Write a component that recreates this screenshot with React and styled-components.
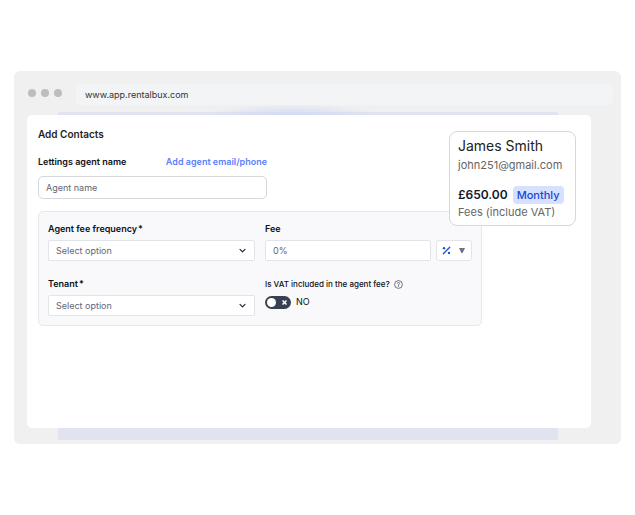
import React, { useState } from 'react';
import styled, { createGlobalStyle } from 'styled-components';

const GlobalStyle = createGlobalStyle`
  *,
  *::before,
  *::after {
    box-sizing: border-box;
  }

  body {
    margin: 0;
    background: #fff;
    color: #0f172a;
    font-family: Inter, 'Liberation Sans', sans-serif;
    font-size: 9px;
    line-height: 14px;
  }

  button,
  input,
  select {
    font: inherit;
  }
`;

const Browser = styled.main`
  margin: 71px 14px;
  padding: 13px 8px 4px 13px;
  border-radius: 6px;
  background: #f0f0f0;
`;
const Toolbar = styled.header`
  position: relative;
  z-index: 1;
  display: flex;
  align-items: center;
  gap: 14px;
`;
const Dots = styled.div`
  display: flex;
  gap: 5px;
  padding: 0 0 3px 1px;
`;
const Dot = styled.span`
  width: 8px;
  height: 8px;
  border-radius: 50%;
  background: #bdbdbf;
`;
const Address = styled.input`
  flex: 1;
  min-width: 0;
  height: 21px;
  padding: 0 9px 1px;
  border: 0;
  border-radius: 4px;
  background: #f3f4f6;
  color: #333;
`;
const Stage = styled.div`
  position: relative;
  margin: 7px 22px 0 0;
  padding: 3px 0 12px;

  /* lavender sheet behind the panel */
  &::before {
    content: '';
    position: absolute;
    inset: 0 33px 0 31px;
    background: #e2e3f0;
  }

  &::after {
    content: '';
    position: absolute;
    top: -8px;
    left: 47%;
    width: 180px;
    height: 24px;
    transform: translateX(-50%);
    background: radial-gradient(closest-side, #d0daf6, #d0daf600);
  }
`;
const Panel = styled.section`
  position: relative;
  z-index: 1;
  min-height: 313px;
  padding: 12px 109px 20px 11px;
  border-radius: 5px;
  background: #fff;
`;
const Title = styled.h1`
  margin: 0;
  color: #1f1f1f;
  font-size: 10px;
  font-weight: 600;
  line-height: 14px;
`;
const AgentField = styled.div`
  max-width: 229px;
  margin-top: 14px;
`;
const LabelRow = styled.div`
  display: flex;
  justify-content: space-between;
  margin-bottom: 7px;
`;
const Label = styled.label`
  display: block;
  color: #0b1020;
  font-size: ${props => (props.$small ? '8px' : '9px')};
  font-weight: ${props => (props.$small ? 500 : 600)};
`;
const AddLink = styled.a`
  color: #5a80ff;
  font-size: 9px;
  font-weight: 600;
  text-decoration: none;
`;
const TextInput = styled.input`
  display: block;
  width: 100%;
  min-width: 0;
  height: ${props => (props.$tall ? '23px' : '21px')};
  padding: 0 7px;
  border: 1px solid ${props => (props.$tall ? '#d6d7da' : '#e3e4ea')};
  border-radius: ${props => (props.$tall ? '5px' : '2px')};
  background: #fff;
  color: #0f172a;
  font-size: 9px;

  &::placeholder {
    color: #5f6675;
    opacity: 1;
  }
`;
const FeeBox = styled.div`
  display: grid;
  grid-template-columns: 1fr 1fr;
  gap: 16px 10px;
  margin-top: 12px;
  padding: 10px 9px 9px;
  border: 1px solid #e8e8ec;
  border-radius: 5px;
  background: #f9f9fc;
`;
const Field = styled.div`
  min-width: 0;
`;
const FieldLabel = styled(Label)`
  margin-bottom: 4px;
`;
const Required = styled.span`
  margin-left: 1px;
`;
const SelectWrap = styled.div`
  position: relative;

  svg {
    position: absolute;
    top: 7px;
    right: 9px;
    pointer-events: none;
  }
`;
const Select = styled.select`
  display: block;
  width: 100%;
  height: 21px;
  padding: 0 20px 0 7px;
  appearance: none;
  border: 1px solid #e3e4ea;
  border-radius: 2px;
  background: #fff;
  color: #5f6675;
  font-size: 9px;
`;
const FeeRow = styled.div`
  display: grid;
  grid-template-columns: 1fr 36px;
  gap: 5px;
`;
const UnitButton = styled.button`
  display: flex;
  align-items: center;
  justify-content: space-between;
  padding: 0 6px 0 5px;
  border: 1px solid #e3e4ea;
  border-radius: 3px;
  background: #fff;
`;
const VatLabel = styled.div`
  display: flex;
  align-items: center;
  gap: 4px;
  margin-bottom: 4px;
`;
const Toggle = styled.label`
  display: inline-flex;
  align-items: center;
  gap: 5px;
  color: #0b1020;
  font-size: 9px;
`;
const Switch = styled.input`
  display: flex;
  align-items: center;
  width: 26px;
  height: 13px;
  margin: 0;
  padding: 0 2px;
  appearance: none;
  border-radius: 7px;
  background: #374151;

  &::before {
    content: '';
    width: 9px;
    height: 9px;
    border-radius: 50%;
    background: #fff;
  }

  &:checked {
    flex-direction: row-reverse;
    background: #2450d8;
  }
`;
const SwitchWrap = styled.span`
  position: relative;
  display: flex;

  svg {
    position: absolute;
    top: 4px;
    right: 4px;
    pointer-events: none;
  }
`;
const ContactCard = styled.aside`
  position: absolute;
  top: 16px;
  right: 15px;
  width: 127px;
  padding: 5px 8px;
  border: 1px solid #d5d7db;
  border-radius: 8px;
  background: #fff;
`;
const ContactName = styled.h2`
  margin: 0 0 2px;
  color: #222;
  font-size: 14px;
  font-weight: 400;
  line-height: 18px;
`;
const Muted = styled.p`
  margin: 0;
  color: #666;
  font-size: 11px;
  line-height: 16px;
  white-space: nowrap;
`;
const Price = styled.div`
  display: flex;
  align-items: center;
  gap: 5px;
  margin: 13px 0 0;
  font-size: 12px;
  font-weight: 600;
  line-height: 18px;
`;
const Badge = styled.span`
  padding: 0 4px;
  border-radius: 4px;
  background: #d6e0ff;
  color: #1748d1;
  font-size: 11px;
  font-weight: 500;
`;

const Chevron = () => (
  <svg width="7" height="7" viewBox="0 0 7 7" fill="none" stroke="#1f2937" strokeWidth="1.2">
    <path d="M1 2.3 3.5 4.8 6 2.3" strokeLinecap="round" strokeLinejoin="round" />
  </svg>
);

const PercentIcon = () => (
  <svg width="9" height="9" viewBox="0 0 9 9" fill="#1d4ed8">
    <path d="M1.3 7.7 7.7 1.3" stroke="#1d4ed8" strokeWidth="1.3" strokeLinecap="round" />
    <circle cx="2" cy="2.2" r="1.2" />
    <circle cx="7" cy="6.9" r="1.2" />
  </svg>
);

const HelpIcon = () => (
  <svg width="9" height="9" viewBox="0 0 9 9" fill="none" stroke="#4b5563">
    <circle cx="4.5" cy="4.5" r="3.9" strokeWidth="0.8" />
    <path d="M3.4 3.6C3.4 2 5.7 2.1 5.6 3.5 5.5 4.2 4.5 4.2 4.5 5.1V6.8" strokeWidth="0.8" />
  </svg>
);

const SelectField = ({ id, label }) => (
  <Field>
    <FieldLabel htmlFor={id}>
      {label}
      <Required>*</Required>
    </FieldLabel>
    <SelectWrap>
      <Select id={id}>
        <option>Select option</option>
      </Select>
      <Chevron />
    </SelectWrap>
  </Field>
);

const App = () => {
  const [vat, setVat] = useState(false);

  return (
    <>
      <GlobalStyle />
      <Browser>
        <Toolbar>
          <Dots>
            <Dot />
            <Dot />
            <Dot />
          </Dots>
          <Address aria-label="Address" defaultValue="www.app.rentalbux.com" />
        </Toolbar>
        <Stage>
          <Panel>
            <Title>Add Contacts</Title>
            <AgentField>
              <LabelRow>
                <Label htmlFor="agent">Lettings agent name</Label>
                <AddLink href="#contact">Add agent email/phone</AddLink>
              </LabelRow>
              <TextInput id="agent" $tall placeholder="Agent name" />
            </AgentField>
            <FeeBox>
              <SelectField id="frequency" label="Agent fee frequency" />
              <Field>
                <FieldLabel htmlFor="fee">Fee</FieldLabel>
                <FeeRow>
                  <TextInput id="fee" placeholder="0%" />
                  <UnitButton type="button" aria-label="Fee unit">
                    <PercentIcon />
                    <svg width="6" height="5" viewBox="0 0 6 5" fill="#6b7280">
                      <path d="M0 0H6L3.6 5H2.4Z" />
                    </svg>
                  </UnitButton>
                </FeeRow>
              </Field>
              <SelectField id="tenant" label="Tenant" />
              <Field>
                <VatLabel>
                  <Label htmlFor="vat" $small>
                    Is VAT included in the agent fee?
                  </Label>
                  <HelpIcon />
                </VatLabel>
                <Toggle>
                  <SwitchWrap>
                    <Switch
                      id="vat"
                      type="checkbox"
                      role="switch"
                      checked={vat}
                      onChange={e => setVat(e.target.checked)}
                    />
                    {!vat && (
                      <svg width="5" height="5" viewBox="0 0 5 5" stroke="#fff" strokeWidth="1.5">
                        <path d="M0.5 0.5 4.5 4.5M4.5 0.5 0.5 4.5" />
                      </svg>
                    )}
                  </SwitchWrap>
                  {vat ? 'YES' : 'NO'}
                </Toggle>
              </Field>
            </FeeBox>
            <ContactCard>
              <ContactName>James Smith</ContactName>
              <Muted>john251@gmail.com</Muted>
              <Price>
                £650.00 <Badge>Monthly</Badge>
              </Price>
              <Muted>Fees (include VAT)</Muted>
            </ContactCard>
          </Panel>
        </Stage>
      </Browser>
    </>
  );
};

export default App;
